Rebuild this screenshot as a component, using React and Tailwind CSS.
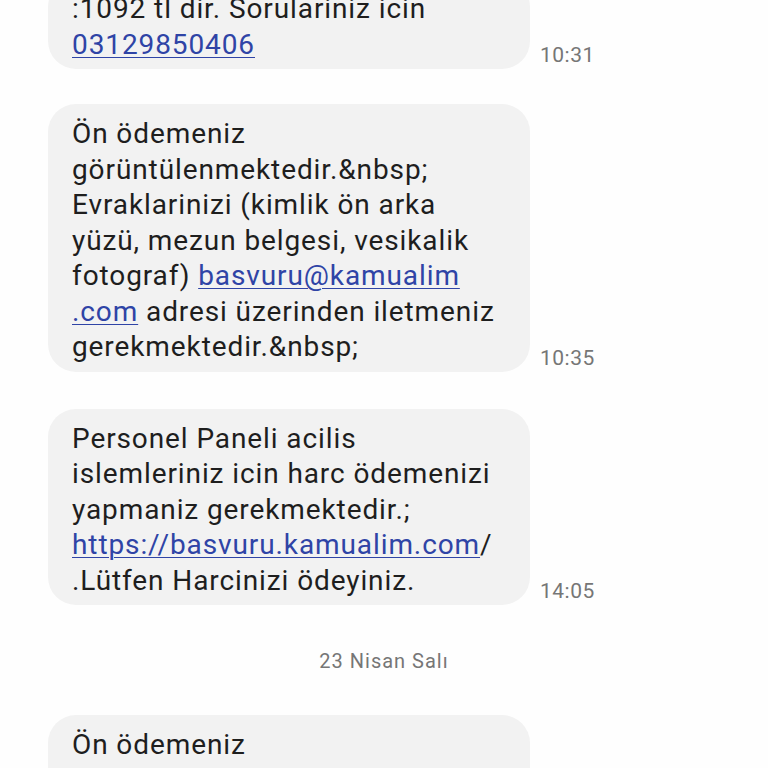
const LINK = "text-[#2f44a6] underline decoration-1 underline-offset-[3px]";

function Bubble({ time, children, className = "" }) {
  return (
    <div className={`flex items-end ${className}`}>
      <div className="ml-[48px] w-[482px] rounded-[28px] bg-[#f2f2f2] pl-[24px] pr-[12px] pt-[12px] pb-[7px] text-[28px] leading-[35.5px] tracking-[0.9px] text-[#1e1e1e]">
        {children}
      </div>
      {time && (
        <span className="ml-[10px] pb-[2px] text-[21px] leading-[24px] tracking-[0.5px] text-[#767676]">
          {time}
        </span>
      )}
    </div>
  );
}

function L({ children }) {
  return <div className="whitespace-nowrap">{children}</div>;
}

export default function App() {
  return (
    <div
      className="h-[768px] w-[768px] overflow-hidden bg-[#fefefe]"
      style={{ fontFamily: "Roboto, 'Noto Sans', sans-serif" }}
    >
      <Bubble time="10:31" className="-mt-[21px]">
        <L>:1092 tl dir. Sorulariniz icin</L>
        <L>
          <span className={LINK}>03129850406</span>
        </L>
      </Bubble>

      <Bubble time="10:35" className="mt-[35px]">
        <L>Ön ödemeniz</L>
        <L>görüntülenmektedir.&amp;nbsp;</L>
        <L>Evraklarinizi (kimlik ön arka</L>
        <L>yüzü, mezun belgesi, vesikalik</L>
        <L>
          fotograf) <span className={LINK}>basvuru@kamualim</span>
        </L>
        <L>
          <span className={LINK}>.com</span> adresi üzerinden iletmeniz
        </L>
        <L>gerekmektedir.&amp;nbsp;</L>
      </Bubble>

      <Bubble time="14:05" className="mt-[37px]">
        <L>Personel Paneli acilis</L>
        <L>islemleriniz icin harc ödemenizi</L>
        <L>yapmaniz gerekmektedir.;</L>
        <L>
          <span className={LINK}>https://basvuru.kamualim.com</span>/
        </L>
        <L>.Lütfen Harcinizi ödeyiniz.</L>
      </Bubble>

      <div className="mt-[44px] mb-[42px] text-center text-[20px] leading-[24px] tracking-[1px] text-[#767676]">
        23 Nisan Salı
      </div>

      <Bubble>
        <L>Ön ödemeniz</L>
        <L>görüntülenmektedir.&amp;nbsp;</L>
        <L>Evraklarinizi (kimlik ön arka</L>
      </Bubble>
    </div>
  );
}
